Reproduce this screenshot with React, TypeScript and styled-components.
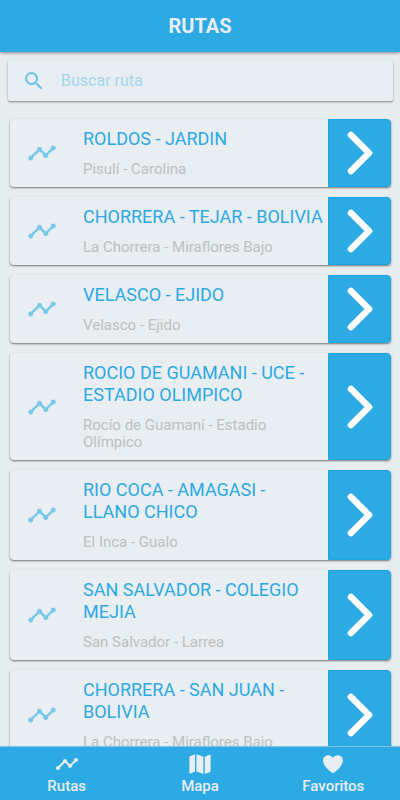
import React, { useState } from "react";
import styled, { createGlobalStyle } from "styled-components";
import { MdSearch, MdTimeline } from "react-icons/md";

const blue = "#2da9e3";
const pale = "#e8eef1";

const GlobalStyle = createGlobalStyle`
  * { box-sizing: border-box; }
  body {
    margin: 0;
    background: #e7ecef;
    font-family: Roboto, "Liberation Sans", sans-serif;
  }
`;

const Screen = styled.div`
  display: flex;
  flex-direction: column;
  height: 100vh;
`;

const Header = styled.header`
  display: flex;
  justify-content: center;
  align-items: center;
  height: 52px;
  flex: none;
  background: ${blue};
  box-shadow: 0 1px 3px rgba(0, 0, 0, 0.45);
`;

const HeaderTitle = styled.h1`
  margin: 0;
  font-size: 20px;
  line-height: 24px;
  font-weight: 700;
  color: ${pale};
`;

const SearchBox = styled.label`
  display: flex;
  align-items: center;
  gap: 15px;
  flex: none;
  height: 41px;
  margin: 8px 7px 0 8px;
  padding: 0 14px;
  border-radius: 2px;
  background: ${pale};
  color: #6bc1e8;
  box-shadow: 0 1px 2px rgba(0, 0, 0, 0.45);
`;

const SearchInput = styled.input`
  flex: 1;
  min-width: 0;
  padding: 0;
  border: 0;
  outline: 0;
  background: transparent;
  font: inherit;
  font-size: 16px;
  line-height: 20px;
  color: ${blue};

  &::placeholder {
    color: #a3d6ee;
    opacity: 1;
  }
`;

const RouteList = styled.ul`
  display: flex;
  flex-direction: column;
  gap: 10px;
  flex: 1;
  min-height: 0;
  margin: 8px 0 0;
  padding: 10px 9px 10px 10px;
  list-style: none;
  overflow-y: auto;
  scrollbar-width: none;
`;

const RouteCard = styled.li`
  display: flex;
  flex: none;
  border-radius: 4px;
  background: ${pale};
  box-shadow: 0 1px 2px rgba(0, 0, 0, 0.5);
`;

const RouteIcon = styled.div`
  display: flex;
  align-items: center;
  padding-left: 17px;
  width: 73px;
  flex: none;
  color: #7ac8ea;
`;

const RouteText = styled.div`
  flex: 1;
  min-width: 0;
  padding: 9px 4px 9px 0;
`;

const RouteName = styled.h2`
  margin: 0 0 11px;
  font-size: 18px;
  line-height: 22px;
  font-weight: 400;
  color: ${blue};
`;

const RouteEnds = styled.p`
  margin: 0;
  padding-right: 24px;
  font-size: 15px;
  line-height: 17px;
  color: #bdbfc0;
`;

const OpenButton = styled.button`
  display: flex;
  align-items: center;
  justify-content: center;
  width: 63px;
  flex: none;
  padding: 0;
  border: 1px solid #1ba6e2;
  border-radius: 0 4px 4px 0;
  background: ${blue};
  cursor: pointer;
`;

const TabBar = styled.nav`
  display: flex;
  flex: none;
  height: 54px;
  background: ${blue};
  border-top: 1px solid #7fc4e6;
`;

const Tab = styled.a`
  display: flex;
  flex: 1;
  flex-direction: column;
  align-items: center;
  padding-top: 5px;
  gap: 1px;
  color: ${pale};
  font-size: 15px;
  line-height: 18px;
  font-weight: 500;
  text-decoration: none;
`;

const Chevron = () => (
  <svg width="26" height="44" viewBox="0 0 26 44" fill="none" aria-hidden="true">
    <path d="M4 4L22 22L4 40" stroke="#fff" strokeWidth="6.6" strokeLinecap="round" strokeLinejoin="round" />
  </svg>
);

const MapIcon = () => (
  <svg width="24" height="24" viewBox="0 0 24 24" fill="currentColor" aria-hidden="true">
    <path d="M1.4 5.2Q1.4 4.6 2 4.3L7 2.3V19.6L2.3 21.6Q1.4 21.9 1.4 21Z" />
    <path d="M8.4 2.3L15.4 4.7V22L8.4 19.6Z" />
    <path d="M16.8 4.7L21.7 2.7Q22.6 2.4 22.6 3.3V19.2Q22.6 19.8 22 20.1L16.8 22Z" />
  </svg>
);

const HeartIcon = () => (
  <svg width="24" height="24" viewBox="0 0 24 24" fill="currentColor" aria-hidden="true">
    <path d="M16.9 3.2h-.1C14.8 3.2 13 4.3 12 5.9C11 4.3 9.2 3.2 7.200 3.200H7.100C4.300 3.200 2.100 5.500 2.100 8.300c0 1.600.7 4 2.100 5.900C6.900 17.900 12 21.300 12 21.300s5.100-3.400 7.800-7.100c1.400-1.900 2.100-4.300 2.100-5.900 0-2.800-2.200-5.100-5-5.100z" />
  </svg>
);

const routes = [
  { name: "ROLDOS - JARDIN", ends: "Pisulí - Carolina" },
  { name: "CHORRERA - TEJAR - BOLIVIA", ends: "La Chorrera - Miraflores Bajo" },
  { name: "VELASCO - EJIDO", ends: "Velasco - Ejido" },
  { name: "ROCIO DE GUAMANI - UCE - ESTADIO OLIMPICO", ends: "Rocío de Guamaní - Estadio Olímpico" },
  { name: "RIO COCA - AMAGASI - LLANO CHICO", ends: "El Inca - Gualo" },
  { name: "SAN SALVADOR - COLEGIO MEJIA", ends: "San Salvador - Larrea" },
  { name: "CHORRERA - SAN JUAN - BOLIVIA", ends: "La Chorrera - Miraflores Bajo" },
];

export default function App() {
  const [query, setQuery] = useState("");
  const needle = query.trim().toLowerCase();
  const visible = routes.filter((r) => `${r.name} ${r.ends}`.toLowerCase().includes(needle));

  return (
    <>
      <GlobalStyle />
      <Screen>
        <Header>
          <HeaderTitle>RUTAS</HeaderTitle>
        </Header>
        <SearchBox>
          <MdSearch size={24} aria-hidden="true" />
          <SearchInput
            type="text"
            aria-label="Buscar ruta"
            placeholder="Buscar ruta"
            value={query}
            onChange={(e) => setQuery(e.target.value)}
          />
        </SearchBox>
        <RouteList>
          {visible.map((route) => (
            <RouteCard key={route.name}>
              <RouteIcon>
                <MdTimeline size={30} aria-hidden="true" />
              </RouteIcon>
              <RouteText>
                <RouteName>{route.name}</RouteName>
                <RouteEnds>{route.ends}</RouteEnds>
              </RouteText>
              <OpenButton type="button" aria-label={`Ver ${route.name}`}>
                <Chevron />
              </OpenButton>
            </RouteCard>
          ))}
        </RouteList>
        <TabBar>
          <Tab href="#rutas" aria-current="page">
            <MdTimeline size={24} aria-hidden="true" />
            Rutas
          </Tab>
          <Tab href="#mapa">
            <MapIcon />
            Mapa
          </Tab>
          <Tab href="#favoritos">
            <HeartIcon />
            Favoritos
          </Tab>
        </TabBar>
      </Screen>
    </>
  );
}
